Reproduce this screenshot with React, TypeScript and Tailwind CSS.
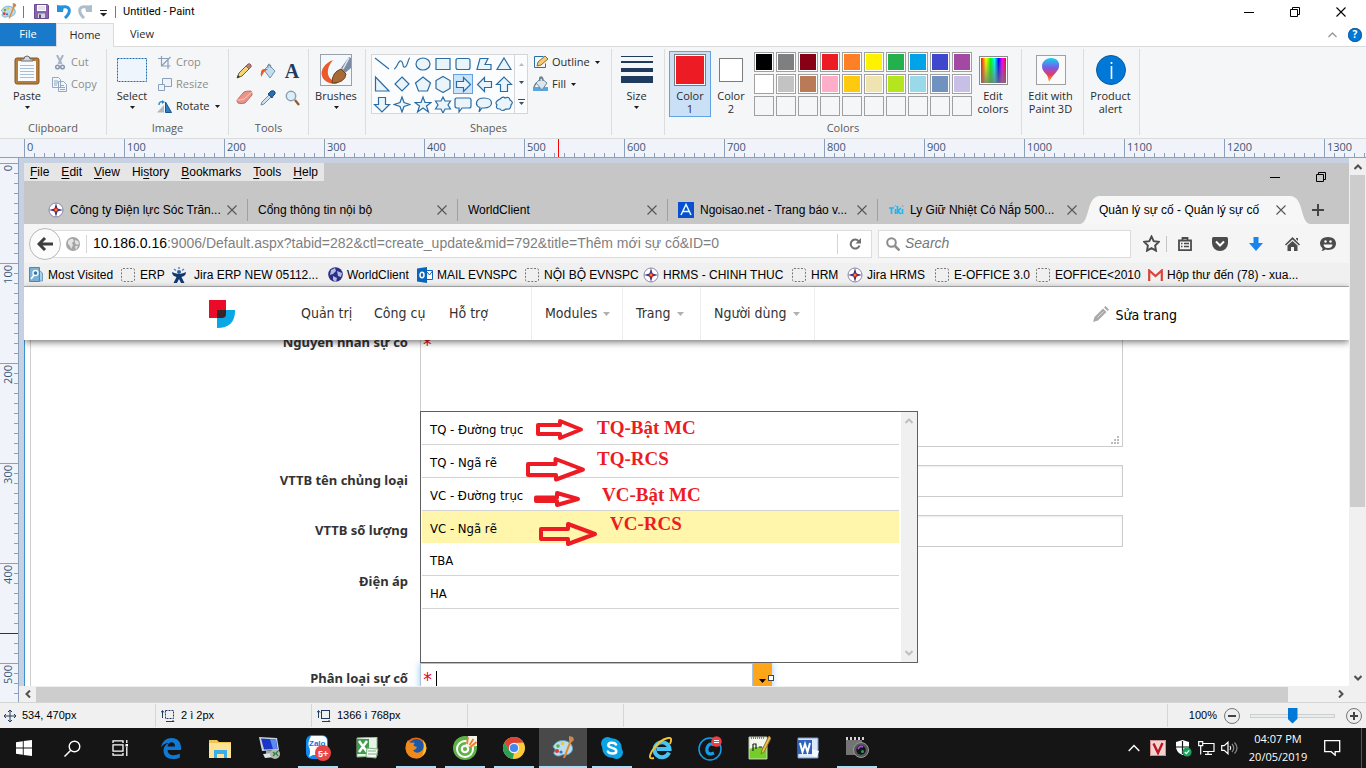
import React from "react";

const ui = "font-['Open_Sans','Noto_Sans',sans-serif]";
const sans = "font-['Liberation_Sans',Arial,sans-serif]";
const tahoma = "font-['DejaVu_Sans_Condensed','Noto_Sans',sans-serif]";

type Kids = { children?: React.ReactNode };

function Svg({ w, h, vb, children, className = "" }: Kids & { w: number; h: number; vb?: string; className?: string }) {
  return (
    <svg width={w} height={h} viewBox={vb ?? `0 0 ${w} ${h}`} fill="none" className={`shrink-0 ${className}`} aria-hidden="true">
      {children}
    </svg>
  );
}

const Caret = ({ className = "" }: { className?: string }) => (
  <Svg w={5} h={3} className={className}><path d="M0 0h5L2.5 3z" fill="#1b1b1b" /></Svg>
);

/* ---------- shared icons ---------- */

const Palette = ({ size }: { size: number }) => (
  <Svg w={size} h={size} vb="0 0 24 24">
    <path d="M3 9C6 4 14 3 19 7c4 4 3 9-1 11-3 2-5 0-7 1s-5 2-8-1c-1-2 2-3 1-5S1 12 3 9z" fill="#b9def0" stroke="#5f9cc0" />
    <circle cx="7" cy="10" r="1.8" fill="#57b13a" /><circle cx="11.500" cy="7.500" r="1.800" fill="#f2c531" />
    <circle cx="6" cy="15" r="2" fill="#e2382c" /><circle cx="10" cy="16" r="1.600" fill="#3d72c4" />
    <path d="M12 22L19 4l2 1-7 17z" fill="#e58a2c" /><path d="M18 5l0-5 4 1 1 3-2 2z" fill="#c98b4d" />
  </Svg>
);

const WinMin = () => <Svg w={10} h={10}><path d="M0 5.500h10" stroke="#000" /></Svg>;
const WinRestore = () => <Svg w={10} h={10}><path d="M.5 2.500h7v7h-7zM2.500 2.500v-2h7v7h-2" stroke="#000" /></Svg>;
const X = ({ s = 10, c = "#555" }: { s?: number; c?: string }) => (
  <Svg w={s} h={s} vb="0 0 10 10"><path d="M.5 .5l9 9M9.500 .5l-9 9" stroke={c} strokeWidth="1.100" /></Svg>
);

/* ---------- title bar and tabs ---------- */

function TitleBar() {
  return (
    <header className={`flex h-[23px] shrink-0 items-center bg-white pr-5 ${sans}`}>
      <Palette size={17} />
      <span className="ml-[6px] h-3 w-px bg-[#777]" />
      <button aria-label="Save" className="ml-[10px]">
        <Svg w={15} h={15}><path d="M.5 .5h13l1 1v13H.5z" fill="#8a62ad" stroke="#6f4a93" /><path d="M3 1h9v6H3z" fill="#fff" /><path d="M4 3h7M4 5h7" stroke="#c9c9d6" /><path d="M4 9.500h7V14H4z" fill="#d5d5dd" /><path d="M5 10.500h2V14H5z" fill="#55556b" /></Svg>
      </button>
      <button aria-label="Undo" className="ml-[8px]">
        <Svg w={14} h={14}><path d="M2 3q8-3 10 1 1.500 4-4 9" stroke="#2493dd" strokeWidth="3" /><path d="M0 0l7 1-1 6H0z" fill="#2493dd" /></Svg>
      </button>
      <button aria-label="Redo" className="ml-[7px]">
        <Svg w={14} h={14}><path d="M12 3Q4 0 2 4q-1.500 4 4 9" stroke="#aebdcb" strokeWidth="3" /><path d="M14 0L7 1l1 6h6z" fill="#aebdcb" /></Svg>
      </button>
      <button aria-label="Customize" className="ml-[8px] mt-1">
        <Svg w={7} h={7}><path d="M0 .5h7" stroke="#222" /><path d="M0 3h7L3.500 6.500z" fill="#222" /></Svg>
      </button>
      <span className="ml-[8px] h-3 w-px bg-[#777]" />
      <h1 className="ml-[7px] pt-[2px] font-['Roboto','Liberation_Sans',sans-serif] text-[11px] text-black">Untitled - Paint</h1>
      <div className="ml-auto flex items-center gap-9">
        <button aria-label="Minimize"><WinMin /></button>
        <button aria-label="Restore"><WinRestore /></button>
        <button aria-label="Close"><X c="#000" /></button>
      </div>
    </header>
  );
}

function RibbonTabs() {
  return (
    <nav className={`flex h-[23px] shrink-0 items-stretch bg-white text-[11px] text-[#2b2b2b] ${ui}`}>
      <button className="w-14 bg-[#1979ca] text-white">File</button>
      <button className="z-10 -mb-px w-[58px] border-x border-t border-[#dadbdc] bg-[#f5f6f7]">Home</button>
      <button className="w-[56px]">View</button>
      <div className="ml-auto flex items-center gap-[11px] pr-1">
        <button aria-label="Collapse ribbon"><Svg w={9} h={6}><path d="M.5 5l4-4 4 4" stroke="#999" strokeWidth="1.400" /></Svg></button>
        <button aria-label="Help" className="flex size-[14px] items-center justify-center rounded-full bg-[#0078d7] text-[10px] font-bold text-white ring-1 ring-[#1460a0] ring-inset">?</button>
      </div>
    </nav>
  );
}

/* ---------- ribbon ---------- */

function Group({ label, className, children }: Kids & { label?: string; className: string }) {
  return (
    <section className={`flex h-[86px] shrink-0 flex-col border-r border-[#dcdddf] ${className}`}>
      <div className="flex h-[73px] items-start">{children}</div>
      <div className="text-center leading-[14px] text-[#5a5a5a]">{label}</div>
    </section>
  );
}

function Big({ icon, text, text2, caret, className = "" }: { icon: React.ReactNode; text: string; text2?: string; caret?: boolean; className?: string }) {
  return (
    <button className={`flex flex-col items-center pt-[5px] text-[#2b2b2b] ${className}`}>
      <span className="flex h-8 items-center justify-center">{icon}</span>
      <span className="mt-[3px] leading-[13px] whitespace-nowrap">{text}</span>
      {text2 && <span className="leading-[13px] whitespace-nowrap">{text2}</span>}
      {caret && <Caret className="mt-1" />}
    </button>
  );
}

function Small({ icon, text, caret, dim }: { icon: React.ReactNode; text: string; caret?: boolean; dim?: boolean }) {
  return (
    <button className={`flex h-[22px] items-center gap-1 ${dim ? "text-[#8d8d8d]" : "text-[#2b2b2b]"}`}>
      <span className="flex w-[15px] shrink-0 items-center justify-center">{icon}</span>
      <span>{text}</span>
      {caret && <Caret className="ml-px" />}
    </button>
  );
}

const shapePaths = [
  "M2 3l14 11", "M1 14c3 0 4-9 7-8s1 7 4 6 3-9 5-9", "M9 3a7 6 0 1 1 0 12a7 6 0 1 1 0-12z", "M2 3.500h14v11H2z", "M4 3.500h10q2 0 2 2v7q0 2-2 2H4q-2 0-2-2v-7q0-2 2-2z", "M5 3.500h8l-3 6h6v5H2z", "M9 3l7 11.500H2z",
  "M2.500 2v14h13.500z", "M9 2l7 7-7 7-7-7z", "M9 2l7.500 6-3 8h-9l-3-8z", "M9 1.500l7 4v8l-7 4-7-4v-8z", "M2.500 6.500h7v-4l7 7-7 7v-4h-7z", "M16.500 6.500h-7v-4l-7 7 7 7v-4h7z", "M5.500 16.500h7v-7h4L9 2 1.500 9.500h4z",
  "M5.500 2.500h7v7h4L9 17 1.500 9.500h4z", "M9 2l2 5.500 6 2-6 2-2 5.500-2-5.500-6-2 6-2z", "M9 2l2 5.500h6l-4.500 3.500 2 6L9 13l-5.500 4 2-6L1 7.500h6z", "M9 2l2 4h5.500l-2.500 4 2.500 4H11l-2 4-2-4H1.500L4 10 1.500 6H7z", "M3 3h12q2 0 2 2v6q0 2-2 2H8l-3 4v-4H3q-2 0-2-2V5q0-2 2-2z", "M9 3c10 0 10 10 0 10H7l-3 4 1-4.500C-1 10 1 3 9 3z", "M5 4q3-3 5-1 4-2 5 2 4 2 1 5 0 5-5 4-4 3-6 0-5 0-3-4-3-3 3-6z",
];

function ShapesGallery() {
  return (
    <div className="mt-[5px] ml-[5px] flex h-[60px] w-[157px] shrink-0 border border-[#d5d6d8] bg-[#fbfcfd]">
      <div className="grid w-[142px] grid-cols-7">
        {shapePaths.map((d, i) => (
          <button key={i} aria-label={`Shape ${i + 1}`} className={`flex items-center justify-center ${i === 11 ? "border border-[#62a2e4] bg-[#cce4fb]" : ""}`}>
            <Svg w={18} h={18}><path d={d} stroke="#2b6ca3" strokeWidth="1.200" fill={i < 2 ? "none" : "#e9f4fb"} /></Svg>
          </button>
        ))}
      </div>
      <div className="flex flex-1 flex-col items-center justify-around border-l border-[#d5d6d8]">
        <Svg w={5} h={3}><path d="M0 3h5L2.500 0z" fill="#b5bac2" /></Svg>
        <Svg w={5} h={3}><path d="M0 0h5L2.500 3z" fill="#3b4d68" /></Svg>
        <Svg w={7} h={6}><path d="M0 .5h7" stroke="#3b4d68" /><path d="M1 3h5L3.500 6z" fill="#3b4d68" /></Svg>
      </div>
    </div>
  );
}

const swatches = [
  "bg-[#000000]", "bg-[#7f7f7f]", "bg-[#880015]", "bg-[#ed1c24]", "bg-[#ff7f27]", "bg-[#fff200]", "bg-[#22b14c]", "bg-[#00a2e8]", "bg-[#3f48cc]", "bg-[#a349a4]",
  "bg-[#ffffff]", "bg-[#c3c3c3]", "bg-[#b97a57]", "bg-[#ffaec9]", "bg-[#ffc90e]", "bg-[#efe4b0]", "bg-[#b5e61d]", "bg-[#99d9ea]", "bg-[#7092be]", "bg-[#c8bfe7]",
  "", "", "", "", "", "", "", "", "", "",
];

function Tool({ name, children }: Kids & { name: string }) {
  return <button aria-label={name} className="flex h-[27px] w-6 items-center justify-center">{children}</button>;
}

function Ribbon() {
  return (
    <div className={`flex shrink-0 border-y border-[#dadbdc] bg-[#f5f6f7] pt-[2px] pb-[3px] text-[11px] ${ui}`}>
      <Group label="Clipboard" className="w-[107px]">
        <Big className="ml-[2px] w-[50px]" text="Paste" caret icon={
          <Svg w={26} h={30}><rect x="1" y="3" width="24" height="26" rx="2" fill="#b57d3c" stroke="#855722" /><path d="M4 6h18v20H4z" fill="#f8fbfe" /><path d="M6 10.500h14M6 13.500h14M6 16.500h14M6 19.500h14M6 22.500h14" stroke="#a6bed6" /><path d="M7 6V4h3q0-3 3-3t3 3h3v2z" fill="#d7d9dc" stroke="#66696e" /></Svg>} />
        <div className="pt-[2px]">
          <Small dim text="Cut" icon={<Svg w={10} h={15}><path d="M2 0l4.500 9M8 0L3.500 9" stroke="#a5b4c8" strokeWidth="2" /><circle cx="2.500" cy="12" r="1.800" stroke="#8496b1" strokeWidth="1.500" /><circle cx="7.500" cy="12" r="1.800" stroke="#8496b1" strokeWidth="1.500" /></Svg>} />
          <Small dim text="Copy" icon={<Svg w={15} h={15}><path d="M.5 .5h6l2 2v8h-8zM6.500 4.500h5l3 3v7h-8z" fill="#f2f5f9" stroke="#93a8c5" /><path d="M2 4h4M2 6h4M2 8h3M8 8.500h4M8 10.500h5M8 12.500h5" stroke="#93a8c5" /></Svg>} />
        </div>
      </Group>

      <Group label="Image" className="w-[122px]">
        <Big className="w-[50px]" text="Select" caret icon={<Svg w={30} h={24}><rect x=".5" y=".5" width="29" height="23" fill="#eef5fc" stroke="#1c6cad" strokeDasharray="2 1" /></Svg>} />
        <div className="pt-[2px]">
          <Small dim text="Crop" icon={<Svg w={13} h={13}><path d="M3.500 0v10h9M0 2.500h10V13M3.500 10l9-9" stroke="#8a9fbc" strokeWidth="1.200" /></Svg>} />
          <Small dim text="Resize" icon={<Svg w={14} h={13}><path d="M4.500 .5h9v8h-9z" fill="#eef3f9" stroke="#8a9fbc" /><path d="M.5 6.500h6v6h-6z" fill="#eef3f9" stroke="#8a9fbc" /></Svg>} />
          <Small text="Rotate" caret icon={<Svg w={15} h={13}><path d="M0 12.500L7 5v7.500z" fill="#aeb7c2" /><path d="M8.500 2l6 10.500h-6z" fill="#2d7fc2" stroke="#16578f" /><path d="M2 5q0-4 4-3" stroke="#2f87d4" strokeWidth="1.500" /><path d="M5 0l3 2-3 2z" fill="#2f87d4" /></Svg>} />
        </div>
      </Group>

      <Group label="Tools" className="w-[80px]">
        <div className="grid grid-cols-3 pt-2 pl-[3px]">
          <Tool name="Pencil"><Svg w={16} h={16}><path d="M1 15l2-5 7-7 3 3-7 7z" fill="#f6d575" stroke="#77602a" /><path d="M10 3l2-2q2-1 3 1t-1 3l-1 1z" fill="#d67364" stroke="#7b6a62" /><path d="M1 15l1-3 2 2z" fill="#333" /></Svg></Tool>
          <Tool name="Fill with color"><Svg w={16} h={16}><path d="M4 7l5-5 6 6-5 7z" fill="#c3ddf0" stroke="#7292aa" /><path d="M8 5q-1-4 1-4t2 4" stroke="#7b8c9a" /><path d="M4 6Q0 6 1 14q2-3 3-5l4-3z" fill="#eb5a24" /></Svg></Tool>
          <Tool name="Text"><span className="font-['Liberation_Serif',serif] text-[20px] leading-none font-bold text-[#1e3c63]">A</span></Tool>
          <Tool name="Eraser"><Svg w={17} h={15}><path d="M1 10L8 2q2-1 7-1 1 1 1 4l-7 8q-4 1-7 0-1-1-1-3z" fill="#ec9489" stroke="#c0685d" /><path d="M1 10q4 0 7-1l8-7" stroke="#fbc5be" /></Svg></Tool>
          <Tool name="Color picker"><Svg w={16} h={16}><path d="M1 15l1-3 7-7 2 2-7 7z" fill="#cfe4f2" stroke="#728aa0" /><path d="M8 4l4 4 1-2q3-2 2-4t-4-1L9 3z" fill="#2b6eae" stroke="#1c4a7a" /></Svg></Tool>
          <Tool name="Magnifier"><Svg w={15} h={16}><circle cx="6" cy="6" r="4.700" fill="#dceefa" stroke="#8ea0af" strokeWidth="1.500" /><path d="M10 10l4 5" stroke="#8b5a34" strokeWidth="2.200" /></Svg></Tool>
        </div>
      </Group>

      <Group className="w-[57px]">
        <Big className="w-[54px]" text="Brushes" caret icon={
          <Svg w={32} h={32}><rect x=".5" y=".5" width="31" height="31" fill="#f3f8fc" stroke="#9ba1a8" /><path d="M13 6C5 9 0 16 2 22c1 4 6 8 14 8l3-2C9 28 3 18 13 6z" fill="#ea5a2a" /><path d="M21 14L29 3l2 1v10l-6 5z" fill="#7b8ba3" /><path d="M23 15L29 4" stroke="#dfe6ee" strokeWidth="1.500" /><path d="M12 29q0-11 9-14l5 5q-1 9-14 9z" fill="#a96b35" stroke="#70411d" /></Svg>} />
      </Group>

      <Group label="Shapes" className="w-[246px]">
        <ShapesGallery />
        <div className="ml-[5px] pt-[2px]">
          <Small text="Outline" caret icon={<Svg w={16} h={14}><path d="M1.500 1.500h9M1.500 1.500v11h11v-4" stroke="#2b6ca3" /><path d="M4 11l1-4 7-6 3 3-7 6z" fill="#f2cd76" stroke="#8a6a33" /></Svg>} />
          <Small text="Fill" caret icon={<Svg w={16} h={16}><path d="M0 11h15v4H0z" fill="#58a6e0" /><path d="M3 7l5-5 6 5-5 7z" fill="#d9e6ee" stroke="#71889b" /><path d="M7 5q-1-4 1-4t2 4M3 7l-2 4" stroke="#6c7e8d" strokeWidth="1.400" /></Svg>} />
        </div>
      </Group>

      <Group className="w-[53px]">
        <Big className="w-[49px]" text="Size" caret icon={<Svg w={32} h={28}><path d="M0 0h32v1H0zM0 5h32v2H0zM0 12h32v4H0zM0 20h32v7H0z" fill="#1e3a5f" /></Svg>} />
      </Group>

      <Group label="Colors" className="w-[357px]">
        <button className="mt-[2px] ml-1 flex h-[66px] w-[42px] shrink-0 flex-col items-center border border-[#62a2e4] bg-[#c9e0f7] pt-[2px] text-[#2b2b2b]">
          <span className="size-8 border border-[#7c7c7c] bg-[#ed1c24] ring-1 ring-white ring-inset" />
          <span className="mt-[3px] leading-[13px]">Color</span><span className="leading-[13px]">1</span>
        </button>
        <Big className="w-10" text="Color" text2="2" icon={<span className="size-6 border border-[#7c7c7c] bg-white" />} />
        <div className="mt-[3px] ml-[3px] grid shrink-0 grid-cols-10 gap-[2px]">
          {swatches.map((c, i) => (
            <button key={i} aria-label={`Palette color ${i + 1}`} className={`size-5 border border-[#a0a0a0] ${c ? "bg-white p-px" : ""}`}>
              <span className={`block size-full ${c}`} />
            </button>
          ))}
        </div>
        <Big className="ml-[2px] w-[38px]" text="Edit" text2="colors" icon={
          <span className="block h-[29px] w-[29px] border border-[#8b8b8b] bg-white p-px">
            <span className="block size-full bg-[linear-gradient(to_bottom,transparent,#777777cc),linear-gradient(to_right,#f00,#ff0_20%,#0f0_38%,#0ff_55%,#00f_70%,#f0f_85%,#f00)]" />
          </span>} />
      </Group>

      <Group className="w-[62px]">
        <Big className="w-[57px]" text="Edit with" text2="Paint 3D" icon={
          <Svg w={30} h={30}><defs><linearGradient id="p3d" x1="0" y1="0" x2="0" y2="1"><stop offset="0" stopColor="#12d4ee" /><stop offset=".4" stopColor="#7a5be8" /><stop offset=".7" stopColor="#e53a63" /><stop offset="1" stopColor="#ffb21a" /></linearGradient></defs><rect x=".5" y=".5" width="29" height="29" fill="#fafafa" stroke="#a0a0a0" /><path d="M15 3c6 0 9 4 8 9s-6 7-10 15c-1-4-1-6-3-8s-4-4-4-8 4-8 9-8z" fill="url(#p3d)" /></Svg>} />
      </Group>

      <Group className="w-[56px]">
        <Big className="w-[53px]" text="Product" text2="alert" icon={<Svg w={30} h={30}><circle cx="15" cy="15" r="14.500" fill="#0078d7" stroke="#0b5c9e" /><path d="M15.500 11v13M15.500 7v2" stroke="#fff" strokeWidth="1.600" /></Svg>} />
      </Group>
    </div>
  );
}

/* ---------- rulers ---------- */

function TopRuler() {
  return (
    <div className={`relative flex h-[19px] shrink-0 overflow-hidden border-b border-[#8ba0bb] bg-[#f1f3fa] pl-6 text-[11px] leading-4 text-[#3d5775] ${ui}`}>
      {Array.from({ length: 14 }, (_, i) => (
        <span key={i} className="w-[100px] shrink-0 border-l border-[#8ba0bb] bg-[repeating-linear-gradient(to_right,#8ba0bb_0_1px,transparent_1px_10px)] bg-[length:100%_4px] bg-bottom bg-no-repeat pl-[2px] bg-origin-border">{i * 100}</span>
      ))}
      <span className="absolute top-0 left-[558px] h-full w-px bg-[#ff0000]" />
    </div>
  );
}

function SideRuler() {
  return (
    <div className={`relative w-[19px] shrink-0 overflow-hidden border-r border-[#8ba0bb] bg-[#f1f3fa] pt-[5px] text-[11px] text-[#3d5775] ${ui}`}>
      {Array.from({ length: 6 }, (_, i) => (
        <div key={i} className="flex h-[100px] border-t border-[#8ba0bb] bg-[repeating-linear-gradient(to_bottom,#8ba0bb_0_1px,transparent_1px_10px)] bg-[length:4px_100%] bg-right bg-no-repeat pt-px bg-origin-border">
          <span className="h-max rotate-180 leading-4 [writing-mode:vertical-rl]">{i * 100}</span>
        </div>
      ))}
      <span className="absolute top-[475px] left-0 h-px w-full bg-[#333]" />
    </div>
  );
}

/* ---------- browser window on the canvas ---------- */

const Evn = () => (
  <Svg w={16} h={16}><circle cx="8" cy="8" r="7" fill="#fff" stroke="#7c7f9f" strokeWidth=".9" /><path d="M8 1l1.500 5.500L15 8 9.500 9.500 8 15 6.500 9.500 1 8l5.500-1.500z" fill="#3a3381" /><circle cx="8" cy="8" r="2.300" fill="#d62e2b" /><circle cx="8" cy="8" r="1" fill="#f7a11b" /></Svg>
);
const Blank = () => <Svg w={14} h={14}><rect x=".5" y=".5" width="13" height="13" rx="1.500" stroke="#777" strokeDasharray="2 1.500" /></Svg>;

const menu = [["", "F", "ile"], ["", "E", "dit"], ["", "V", "iew"], ["Hi", "s", "tory"], ["", "B", "ookmarks"], ["", "T", "ools"], ["", "H", "elp"]];

const tabs: { text: string; icon?: React.ReactNode }[] = [
  { text: "Công ty Điện lực Sóc Trăn...", icon: <Evn /> },
  { text: "Cổng thông tin nội bộ" },
  { text: "WorldClient" },
  { text: "Ngoisao.net - Trang báo v...", icon: <Svg w={16} h={16}><path d="M0 0h16v16H0z" fill="#0a4fd0" /><path d="M3 13L8 2.500 13 13M5 9.500h6" stroke="#dff" strokeWidth="1.500" /></Svg> },
  { text: "Ly Giữ Nhiệt Có Nắp 500...", icon: <Svg w={16} h={16}><path d="M1 6h5M3.500 6v6M7.500 7v5M9.500 4v8M13 6l-3 3 3 3M14.500 7v5" stroke="#1cb5ee" strokeWidth="1.600" /><path d="M6.500 4.500q1-2 2 0M13.500 4.500q1-2 2 0" stroke="#1cb5ee" /></Svg> },
];

function BrowserTop() {
  return (
    <div className={`bg-[#c6c6c6] text-[12px] text-black ${sans}`}>
      <div className="flex h-[33px] items-start justify-between">
        <div className="flex h-[18px] items-center bg-[#e6e6e6]">
          {menu.map(([a, b, c]) => (
            <button key={b + c} className="px-[6px]">{a}<u className="underline-offset-2">{b}</u>{c}</button>
          ))}
        </div>
        <div className="flex items-center gap-9 pt-[9px] pr-[23px]"><WinMin /><WinRestore /></div>
      </div>
      <div className="flex h-7 items-center pl-[14px]">
        {tabs.map((t, i) => (
          <div key={i} className={`flex h-[22px] w-[210px] shrink-0 items-center pr-[10px] pl-[10px] ${i < 4 ? "border-r border-[#a0a0a0]" : "border-r border-transparent"}`}>
            {t.icon && <span className="mr-[6px]">{t.icon}</span>}
            <span className="flex-1 truncate text-clip">{t.text}</span>
            <button aria-label="Close tab"><X /></button>
          </div>
        ))}
        <div className="-ml-2 flex h-7 shrink-0 items-center">
          <Svg w={20} h={28}><path d="M0 28C10 27 6 0 20 0v28z" fill="#f7f7f7" /></Svg>
          <div className="-ml-px flex h-7 w-[191px] items-center justify-between bg-[#f7f7f7] pr-1">
            <span className="whitespace-nowrap">Quản lý sự cố - Quản lý sự cố</span>
            <button aria-label="Close tab"><X /></button>
          </div>
          <Svg w={20} h={28}><path d="M20 28C10 27 14 0 0 0v28z" fill="#f7f7f7" /></Svg>
          <button aria-label="New tab" className="ml-[2px]"><Svg w={12} h={12}><path d="M6 0v12M0 6h12" stroke="#444" strokeWidth="2" /></Svg></button>
        </div>
      </div>
    </div>
  );
}

function BrowserToolbar() {
  return (
    <div className={`flex h-[39px] items-center bg-[#f5f5f5] pl-[5px] pr-[3px] ${sans}`}>
      <button aria-label="Back" className="z-10 flex size-8 shrink-0 items-center justify-center rounded-full border border-[#b8b8b8] bg-[#fbfbfb]">
        <Svg w={16} h={14}><path d="M8 1L2 7l6 6M2 7h14" stroke="#3e3e3e" strokeWidth="3" /></Svg>
      </button>
      <div className="-ml-2 flex h-7 flex-1 items-center border border-[#dcdcdc] bg-white pl-[12px]">
        <Svg w={14} h={14}><circle cx="7" cy="7" r="7" fill="#a5a5a5" /><path d="M2 4q3-3 5-2l1 2-2 2 1 2-2 4-1-3-2-2zM9 3l3 1 1 3-2 1-2-2zM9 9l3 0-2 4z" fill="#e4e4e4" /></Svg>
        <span className="ml-[6px] h-[18px] w-px bg-[#d5d5d5]" />
        <div className="ml-[6px] flex-1 text-[14px] whitespace-nowrap text-[#7f7f7f]">
          <span className="text-black">10.186.0.16</span>:9006/Default.aspx?tabid=282&amp;ctl=create_update&amp;mid=792&amp;title=Thêm mới sự cố&amp;ID=0
        </div>
        <button aria-label="Reload" className="flex h-5 w-[34px] items-center justify-center border-l border-[#d5d5d5]">
          <Svg w={12} h={12}><path d="M9.500 3A4.500 4.500 0 1 0 10.500 7.500" stroke="#6f6f6f" strokeWidth="2" /><path d="M12 0v5.500H6.500z" fill="#6f6f6f" /></Svg>
        </button>
      </div>
      <label className="ml-[6px] flex h-7 w-[253px] items-center border border-[#dcdcdc] bg-white pl-[7px]">
        <Svg w={14} h={14}><circle cx="5.500" cy="5.500" r="4.300" stroke="#8c8c8c" strokeWidth="2" /><path d="M9 9l4.500 4.500" stroke="#8c8c8c" strokeWidth="2.500" /></Svg>
        <input aria-label="Search" placeholder="Search" className="ml-[5px] w-full bg-transparent text-[14px] italic outline-none placeholder:text-[#777]" />
      </label>
      <button aria-label="Bookmark this page" className="flex w-[35px] justify-center pl-[6px]"><Svg w={17} h={17}><path d="M8.500 1.500l2.200 4.700 5 .7-3.600 3.600.9 5.200-4.500-2.500L4 15.700l.9-5.200L1.300 6.900l5-.7z" stroke="#4c4c4c" strokeWidth="1.900" /></Svg></button>
      <button aria-label="Bookmarks list" className="flex h-4 w-9 items-center justify-center border-l border-[#c5c5c5]"><Svg w={14} h={14}><path d="M1 3.500h12v9.700H1zM4.500 3V1h5v2" stroke="#4c4c4c" strokeWidth="1.800" /><path d="M3 6.500h1.500M6 6.500h5M3 9.500h1.500M6 9.500h5" stroke="#4c4c4c" strokeWidth="1.400" /></Svg></button>
      <button aria-label="Pocket" className="flex w-9 justify-center"><Svg w={16} h={14}><path d="M1.500 0h13Q16 0 16 1.500V6a8 8 0 0 1-16 0V1.500Q0 0 1.500 0z" fill="#4c4c4c" /><path d="M4 4.500l4 4 4-4" stroke="#fff" strokeWidth="2" /></Svg></button>
      <button aria-label="Downloads" className="flex w-9 justify-center"><Svg w={14} h={14}><path d="M4.500 0h5v6H14l-7 8-7-8h4.500z" fill="#1a84ee" /></Svg></button>
      <button aria-label="Home page" className="flex w-9 justify-center"><Svg w={15} h={14}><path d="M7.500 0L15 7.500l-1 1L7.500 2.500 1 8.500l-1-1zM11 1h2v3l-2-2z" fill="#4c4c4c" /><path d="M2.500 8.500l5-4.500 5 4.500V14H9v-4H6v4H2.500z" fill="#4c4c4c" /></Svg></button>
      <button aria-label="Chat" className="flex w-9 justify-center"><Svg w={16} h={14}><path d="M8 0c5 0 8 2.800 8 6.500S13 13 8 13q-1.500 0-2.500-.4Q4 14 1.500 14q1.200-1.200 1-2.800Q0 9.500 0 6.500C0 2.800 3 0 8 0z" fill="#4c4c4c" /><path d="M3.500 7.500h9Q12 11 8 11T3.500 7.500z" fill="#fff" /><circle cx="5.500" cy="4.500" r="1.200" fill="#fff" /><circle cx="10.500" cy="4.500" r="1.200" fill="#fff" /></Svg></button>
    </div>
  );
}

const bookmarks: { text: string; w: string; icon: React.ReactNode }[] = [
  { text: "Most Visited", w: "w-[92px]", icon: <Svg w={14} h={15}><path d="M.5 .5h10v14H.5z" fill="#7ab0d6" stroke="#4c87b5" /><path d="M11 4l2.500 2v8H11" fill="#a9cfe8" stroke="#6ba0c8" /><circle cx="6.500" cy="6" r="2.500" stroke="#fff" strokeWidth="1.300" fill="#3675ab" /><path d="M5 8l-3 4" stroke="#fff" strokeWidth="1.500" /></Svg> },
  { text: "ERP", w: "w-[52px]", icon: <Blank /> },
  { text: "Jira ERP NEW 05112...", w: "w-[155px]", icon: <Svg w={14} h={16} className="mr-[4px]"><path d="M2 2l2 1.500M12 2l-2 1.500M7 0v2" stroke="#5b87b9" strokeWidth="1.500" /><path d="M0 5q5 2 7 2t7-2q0 4-4.500 5l3 6h-3.500l-2-4-2 4H1.500l3-6Q0 9 0 5z" fill="#123a72" /><circle cx="7" cy="5" r="2" fill="#2d5f9e" /></Svg> },
  { text: "WorldClient", w: "w-[90px]", icon: <Svg w={15} h={15}><circle cx="7.500" cy="7.500" r="7.300" fill="#2c2f86" /><path d="M3 3l4-2 1 3-3 3-3 1zM9 4l5 2-1 4-3-1zM5 9l4 2-1 4-3-2z" fill="#b5bde0" /></Svg> },
  { text: "MAIL EVNSPC", w: "w-[107px]", icon: <Svg w={16} h={16}><path d="M9 3.500h6.500v9H9z" fill="#fff" stroke="#0a66bd" /><path d="M9 4l3.500 4 3-4" stroke="#0a66bd" /><path d="M0 1.500L10 0v16L0 14.500z" fill="#0a66bd" /><ellipse cx="5" cy="8" rx="2" ry="2.700" stroke="#fff" strokeWidth="1.500" /></Svg> },
  { text: "NỘI BỘ EVNSPC", w: "w-[119px]", icon: <Blank /> },
  { text: "HRMS - CHINH THUC", w: "w-[148px]", icon: <Evn /> },
  { text: "HRM", w: "w-[56px]", icon: <Blank /> },
  { text: "Jira HRMS", w: "w-[87px]", icon: <Evn /> },
  { text: "E-OFFICE 3.0", w: "w-[101px]", icon: <Blank /> },
  { text: "EOFFICE<2010", w: "w-[112px]", icon: <Blank /> },
  { text: "Hộp thư đến (78) - xua...", w: "w-[155px]", icon: <Svg w={15} h={12}><path d="M1 11.500h13V1H1z" fill="#f2f2f2" /><path d="M1.200 12V1.500l6.300 5.500 6.300-5.500V12" stroke="#d8433a" strokeWidth="2.200" /></Svg> },
];

function BookmarksBar() {
  return (
    <div className={`flex h-6 items-center border-b border-[#b5b5b5] bg-[#f0f0f0] pl-1 text-[12px] text-black ${sans}`}>
      {bookmarks.map((b) => (
        <a key={b.text} href="#" className={`flex shrink-0 items-center gap-1 whitespace-nowrap ${b.w}`}>
          <span className="flex min-w-4 justify-center">{b.icon}</span>{b.text}
        </a>
      ))}
    </div>
  );
}

function SiteHeader() {
  const drop = (t: string, w: string) => (
    <button className={`flex items-center gap-[6px] border-r border-[#ededed] pl-[13px] ${w}`}>
      {t}<Svg w={7} h={4}><path d="M0 0h7L3.500 4z" fill="#b0b0b0" /></Svg>
    </button>
  );
  return (
    <div className={`relative z-10 flex h-[53px] items-stretch bg-white text-[14px] text-[#333] shadow-[0_2px_7px_rgba(0,0,0,0.55)] ${tahoma}`}>
      <Svg w={26} h={28} className="mt-[13px] ml-[185px]"><path d="M0 0h17v18H0z" fill="#ec0a29" /><path d="M8 10h18v1c0 11-6 17-18 17z" fill="#0aa7e6" /><path d="M8 10h9v4q0 4-4 4H8z" fill="#3b2327" /></Svg>
      <nav className="ml-[66px] flex items-center">
        <a href="#" className="w-[73px]">Quản trị</a>
        <a href="#" className="w-[75px]">Công cụ</a>
        <a href="#" className="w-[82px]">Hỗ trợ</a>
      </nav>
      <nav className="flex border-l border-[#ededed]">
        {drop("Modules", "w-[91px]")}
        {drop("Trang", "w-[78px]")}
        {drop("Người dùng", "w-[114px]")}
      </nav>
      <a href="#" className="mr-[172px] ml-auto flex items-center gap-[6px] pt-1 text-black">
        <Svg w={16} h={16} className="-mt-1"><path d="M0 16l1.500-5L10 2.500 13.500 6 5 14.500z" fill="#a9a9a9" /><path d="M11 1.500L12.500 0 16 3.500 14.500 5z" fill="#a9a9a9" /><path d="M4.500 11.500l6-6" stroke="#d9d9d9" /></Svg>
        Sửa trang
      </a>
    </div>
  );
}

const labelCls = "w-[377px] shrink-0 text-right font-['Noto_Sans','Open_Sans',sans-serif] text-[13px] font-bold text-[#333]";
const inputCls = "h-8 min-w-0 flex-1 border border-[#ccc] shadow-[inset_0_1px_2px_rgba(0,0,0,0.08)] outline-none";

function Form() {
  return (
    <form className={`flex flex-1 flex-col gap-[18px] overflow-hidden border-l border-[#d0d0d0] bg-white pr-[226px] text-[13px] ${tahoma}`}>
      <div className="flex shrink-0 gap-3">
        <label htmlFor="cause" className={`-mt-2 leading-5 ${labelCls}`}>Nguyên nhân sự cố</label>
        <div className="relative h-[107px] flex-1">
          <textarea id="cause" className="block size-full resize-none border border-t-0 border-[#ccc] outline-none" />
          <span className="absolute -top-[6px] left-[3px] text-[19px] leading-5 text-[#f00020]">*</span>
          <Svg w={8} h={8} className="absolute right-1 bottom-[3px]"><path d="M6 0h2v2H6zM3 3h2v2H3zM6 3h2v2H6zM0 6h2v2H0zM3 6h2v2H3zM6 6h2v2H6z" fill="#bbb" /></Svg>
        </div>
      </div>
      <div className="flex shrink-0 items-center gap-3">
        <label htmlFor="kind" className={labelCls}>VTTB tên chủng loại</label>
        <input id="kind" className={inputCls} />
      </div>
      <div className="flex shrink-0 items-center gap-3">
        <label htmlFor="qty" className={labelCls}>VTTB số lượng</label>
        <input id="qty" className={inputCls} />
      </div>
      <div className="flex h-20 shrink-0 gap-3">
        <span className={`leading-8 ${labelCls}`}>Điện áp</span>
      </div>
      <div className="flex shrink-0 items-center gap-3">
        <label htmlFor="category" className={labelCls}>Phân loại sự cố</label>
        <div className="flex h-8 w-[352px] shadow-[0_0_7px_rgba(82,168,236,0.6)]">
          <span className="flex w-[14px] shrink-0 items-center justify-center border-y border-l border-[#a9c4dc] bg-white text-[19px] leading-5 text-[#f00020]">*</span>
          <span className="flex w-[3px] shrink-0 items-center justify-end border-y border-[#a9c4dc] bg-white"><span className="h-4 w-px bg-black" /></span>
          <input id="category" className="w-full min-w-0 border-y border-[#a9c4dc] bg-white outline-none" />
          <button type="button" aria-label="Open list" className="relative flex w-5 shrink-0 items-center justify-center border-l border-[#a9c4dc] bg-[#ffa51a] pt-[4px]">
            <Svg w={7} h={4}><path d="M0 0h7L3.500 4z" fill="#000" /></Svg>
            <span className="absolute top-[12px] -right-[2px] size-[6px] border border-[#444] bg-white" />
          </button>
        </div>
      </div>
    </form>
  );
}

const options = ["TQ - Đường trục", "TQ - Ngã rẽ", "VC - Đường trục", "VC - Ngã rẽ", "TBA", "HA"];

function OptionList() {
  return (
    <div className={`absolute top-[248px] left-[396px] z-20 flex h-[252px] w-[498px] border border-[#5f5f5f] bg-white text-[13px] text-black ${tahoma}`}>
      <ul role="listbox" aria-label="Phân loại sự cố" className="mr-[2px] ml-px flex-1">
        {options.map((o, i) => (
          <li key={o} role="option" aria-selected={i === 3} className={`flex items-center px-2 pt-[3px] ${i === 3 ? "h-8 bg-[#fff5ab]" : "h-[33px] border-b border-[#d3d3d3]"}`}>{o}</li>
        ))}
      </ul>
      <div className="flex w-4 flex-col items-center justify-between bg-[#f0f0f0] py-[6px]">
        <Svg w={8} h={6}><path d="M.5 5L4 1.500 7.500 5" stroke="#bfbfbf" strokeWidth="2" /></Svg>
        <Svg w={8} h={6}><path d="M.5 1L4 4.500 7.500 1" stroke="#bfbfbf" strokeWidth="2" /></Svg>
      </div>
    </div>
  );
}

/* Red notes painted over the list; coordinates are canvas pixels. */
function Notes() {
  const note = "absolute z-30 font-['Liberation_Serif',serif] text-[19px] leading-[22px] font-bold whitespace-nowrap text-[#ed1c24]";
  return (
    <>
      <svg width="80" height="140" viewBox="524 415 80 140" fill="none" stroke="#ed1c24" strokeWidth="4" strokeLinejoin="round" className="absolute top-[252px] left-[500px] z-30" aria-hidden="true">
        <path d="M538 425H560V421L581 429.500L560 438V434H538Z" />
        <path d="M528 464H555.500V459L583 469.500L556 479.500V475H528Z" />
        <path d="M536 497.500H557V493L578 499L557 505V501H536ZM536 499.200H557" />
        <path d="M541 529H568V524L595 534L568 544V539H541Z" />
      </svg>
      <span className={`top-[254px] left-[573px] ${note}`}>TQ-Bật MC</span>
      <span className={`top-[285px] left-[573px] ${note}`}>TQ-RCS</span>
      <span className={`top-[321px] left-[578px] ${note}`}>VC-Bật MC</span>
      <span className={`top-[350px] left-[586px] ${note}`}>VC-RCS</span>
    </>
  );
}

function Canvas() {
  return (
    <div className="relative flex min-h-0 flex-1 flex-col overflow-hidden bg-white">
      <BrowserTop />
      <BrowserToolbar />
      <BookmarksBar />
      <SiteHeader />
      <div className="flex min-h-0 flex-1 border-l border-[#3b93cf] pl-[5px]"><Form /></div>
      <OptionList />
      <Notes />
    </div>
  );
}

/* ---------- status bar and task bar ---------- */

function StatusBar() {
  const cell = "flex h-[23px] w-[156px] items-center gap-[6px] border-r border-[#d5d5d5] pl-1";
  return (
    <footer className={`flex h-[26px] shrink-0 items-center border-t border-[#d5d5d5] bg-[#f0f0f0] text-[11px] text-black ${sans}`}>
      <div className={cell}><Svg w={12} h={12}><path d="M6 0v12M0 6h12M4 2l2-2 2 2M4 10l2 2 2-2M2 4L0 6l2 2M10 4l2 2-2 2" stroke="#1e3c63" /></Svg>534, 470px</div>
      <div className={cell}><Svg w={14} h={12} className="ml-[1px]"><path d="M1.500 1v7M0 2.500L1.500 .5 3 2.500M5 11.500h8M11.500 10l1.500 1.500" stroke="#1e3c63" /><rect x="4.500" y=".5" width="8" height="8" stroke="#1e3c63" strokeDasharray="2 1" /></Svg>2 ì 2px</div>
      <div className={cell}><Svg w={14} h={12} className="ml-[1px]"><path d="M1.500 1v7M0 2.500L1.500 .5 3 2.500M5 11.500h8M11.500 10l1.500 1.500" stroke="#1e3c63" /><rect x="4.500" y=".5" width="8" height="8" stroke="#1e3c63" /></Svg>1366 ì 768px</div>
      <div className={cell} />
      <div className="flex h-[23px] flex-1 border-r border-[#d5d5d5]" />
      <div className="flex w-[198px] items-center justify-end pr-1">
        <span className="mr-[7px]">100%</span>
        <button aria-label="Zoom out" className="flex size-4 items-center justify-center rounded-full border border-[#777] bg-[#eee]"><span className="h-[2px] w-2 bg-[#444]" /></button>
        <input type="range" aria-label="Zoom" defaultValue={50} className="mr-[11px] ml-[10px] h-4 w-[85px] appearance-none bg-transparent [&::-webkit-slider-runnable-track]:h-1 [&::-webkit-slider-runnable-track]:border [&::-webkit-slider-runnable-track]:border-[#ccd0cf] [&::-webkit-slider-runnable-track]:bg-[#e9ecec] [&::-webkit-slider-thumb]:-mt-[7px] [&::-webkit-slider-thumb]:h-4 [&::-webkit-slider-thumb]:w-[10px] [&::-webkit-slider-thumb]:appearance-none [&::-webkit-slider-thumb]:bg-[#0078d7] [&::-webkit-slider-thumb]:[clip-path:polygon(0_0,100%_0,100%_70%,50%_100%,0_70%)]" />
        <button aria-label="Zoom in" className="flex size-4 items-center justify-center rounded-full border border-[#777] bg-[#eee]"><Svg w={8} h={8}><path d="M4 0v8M0 4h8" stroke="#444" strokeWidth="2" /></Svg></button>
      </div>
    </footer>
  );
}

const apps: { name: string; open?: boolean; active?: boolean; icon: React.ReactNode }[] = [
  { name: "Edge", icon: <Svg w={20} h={21}><path d="M0 9.500C1 3 6 0 10.500 0 16.500 0 20 4 20 9.500V12H6.500c.5 4 3 5.200 6 5.200 2.500 0 4.500-.7 6.300-1.700v4C17 20.500 14.500 21 12 21 6 21 2.500 17.500 2.500 12.500 2.500 9 4.500 6.500 8 5 4.500 5 1.500 6.500 0 9.500zM6.500 8.500H14C14 5.500 12.500 4.300 10.500 4.300S7 6 6.500 8.500z" fill="#0f7ad6" /></Svg> },
  { name: "File Explorer", icon: <Svg w={22} h={19}><path d="M0 1h8l2 2h12v16H0z" fill="#f0c452" /><path d="M0 4h22v15H0z" fill="#fde394" /><path d="M5 11h13v8h-3v-4H8v4H5z" fill="#3aaee6" /></Svg> },
  { name: "Remote Desktop", icon: <Svg w={22} h={24}><path d="M1 1l18 1 2 12-17 1z" fill="#c7d3df" /><path d="M3 2.500l15 1 1.500 9.500L6 13.500z" fill="#1a37c8" /><path d="M12 3l6 .5L19 13l-4 .3z" fill="#5c8af0" /><path d="M8 15h5l1 3h-6z" fill="#9ba6b0" /><path d="M5 18l10-1 2 4-10 1z" fill="#dfe4e8" /><circle cx="17" cy="18" r="5" fill="#b3bbaf" /><path d="M15 16l2 2-2 2M20 15l-2 2 2 3" stroke="#25823f" strokeWidth="1.300" /></Svg> },
  { name: "Zalo", open: true, icon: <Svg w={26} h={26}><rect x="1" y="0" width="22" height="24" rx="6" fill="#0d8bf0" /><path d="M6 1h11q5 0 5 5v9q0 5-5 5H8l-4 2q2-6 0-10T6 1z" fill="#fff" /><circle cx="18" cy="18" r="8" fill="#ea4546" /><text x="4" y="11" fontSize="8" fontWeight="700" fill="#1471d8" fontFamily="Liberation Sans">Zalo</text><text x="13" y="22" fontSize="9" fontWeight="700" fill="#fff" fontFamily="Liberation Sans">5+</text></Svg> },
  { name: "Excel", icon: <Svg w={23} h={22}><path d="M1 1l20-1v19L1 20z" fill="#e7f3e6" stroke="#88b98b" /><path d="M1 2h12v15H1z" fill="#3f9c4b" /><path d="M3 4l8 11M11 4L3 15" stroke="#fff" strokeWidth="2.500" /><path d="M11 11l11 1-2 9-10-1z" fill="#f5faf5" stroke="#7aae7d" /><path d="M12 14h8M12 17h8" stroke="#7aae7d" /></Svg> },
  { name: "Firefox", open: true, icon: <Svg w={22} h={22}><circle cx="11" cy="11" r="10.500" fill="#e66b12" /><circle cx="11.500" cy="9.500" r="7.500" fill="#1c58a8" /><path d="M1 7l2-4 2 3q3-1 5 0-2 1-1 3l3 1q-1 3-4 3 2 4 7 2 5-3 4-9 4 5 1 10-3 5-8 5.500Q2 21 .6 12z" fill="#f08a1b" /><path d="M18 3q4 5 3 10-1 4-4 6 3-6 1-16z" fill="#fbc52d" /></Svg> },
  { name: "Coc Coc", open: true, icon: <Svg w={25} h={24}><circle cx="12" cy="12" r="12" fill="#5fb346" /><circle cx="12" cy="13" r="8" stroke="#fff" strokeWidth="2" /><circle cx="12" cy="13" r="3.200" stroke="#fff" strokeWidth="2.200" /><path d="M12 11l3-11h9v10z" fill="#f3f1e8" /><path d="M14 8l1-7M16.500 9l4-6M17.500 11l6-5" stroke="#f27b24" strokeWidth="1.800" /></Svg> },
  { name: "Chrome", open: true, icon: <Svg w={22} h={22}><circle cx="11" cy="11" r="11" fill="#fbcb3c" /><path d="M1.500 5.500A11 11 0 0 1 20.500 5.500L11 6 6 13.500z" fill="#dc4437" /><path d="M1.500 5.500L6.200 13.600 11 16l-1.300 6A11 11 0 0 1 1.500 5.500z" fill="#2ca053" /><circle cx="11" cy="11" r="5.200" fill="#f5f5f5" /><circle cx="11" cy="11" r="4.100" fill="#4587f2" /></Svg> },
  { name: "Paint", open: true, active: true, icon: <Palette size={24} /> },
  { name: "Skype", open: true, icon: <Svg w={22} h={22}><circle cx="11" cy="11" r="9.800" fill="#0da2e4" /><circle cx="6.500" cy="6.500" r="6.500" fill="#0da2e4" /><circle cx="15.500" cy="15.500" r="6.500" fill="#0da2e4" /><path d="M15 7.500C13.500 5.300 7.300 5 7.300 8.300c0 3.200 8 2 8 5.600 0 3.600-7 3.200-8.500.6" stroke="#fff" strokeWidth="2.500" strokeLinecap="round" /></Svg> },
  { name: "Internet Explorer", icon: <Svg w={24} h={23}><path d="M20 15.500A7.500 7.500 0 1 1 20.500 12H8" stroke="#45c3f3" strokeWidth="4" /><path d="M5 21Q-2 23 3 14 10 3 19 1q5-1 2 6" stroke="#f5c431" strokeWidth="1.900" /></Svg> },
  { name: "CCleaner", icon: <Svg w={25} h={25}><circle cx="12" cy="13" r="11" stroke="#139eea" strokeWidth="1.500" /><path d="M16 9q-5-3-7 3-1 6 4 6l3-1" stroke="#139eea" strokeWidth="3.200" /><circle cx="18.500" cy="5.500" r="5.200" fill="#f33c43" /><path d="M16 4.500h5M16 6.500h5" stroke="#fff" /></Svg> },
  { name: "Notepad++", icon: <Svg w={23} h={24}><path d="M1 1h18v22H1z" fill="#f3f6ed" stroke="#b8c5ae" /><path d="M1.500 13q8-4 17-1v10.500h-17z" fill="#73cf28" /><path d="M5 8v7M5 8h3v5M11 11h3M15 11h3" stroke="#222" strokeWidth="1.200" /><path d="M3 2h14" stroke="#7d8378" strokeDasharray="1 1" strokeWidth="2" /><path d="M13 18l1-4 7-14 2 2-7 14z" fill="#eac54d" stroke="#9a6c2c" /></Svg> },
  { name: "Word", icon: <Svg w={23} h={22}><path d="M1 1h20v20H1z" fill="#dbe8fa" stroke="#7896cf" /><path d="M1 3h14v14H1z" fill="#2f62bb" /><path d="M3 6l2.500 9L8 7l2.500 8L13 6" stroke="#fff" strokeWidth="2" /><path d="M15 12l7 2-2 6-5-1z" fill="#f6f9fe" /></Svg> },
  { name: "Recorder", open: true, icon: <Svg w={23} h={22}><path d="M0 3h16v15H0z" fill="#747474" /><path d="M0 1.500h20" stroke="#d5d5d5" strokeWidth="3" strokeDasharray="2 2" /><circle cx="15" cy="13" r="7.500" fill="#55565a" stroke="#999" /><circle cx="15" cy="13" r="4.700" fill="#141418" /><path d="M12 12q2-4 5-2" stroke="#a152d5" strokeWidth="1.800" /><circle cx="16.500" cy="14.500" r="1.500" fill="#2c9a62" /></Svg> },
];

function TaskBar() {
  return (
    <nav className={`flex h-10 shrink-0 items-stretch bg-[#151515] text-[11px] text-white ${ui}`}>
      <button aria-label="Start" className="flex w-12 items-center justify-center"><Svg w={16} h={16}><path d="M0 2.200l6.800-.9v6.300H0zM7.700 1.100L16 0v7.600H7.700zM0 8.400h6.800v6.300L0 13.800zM7.700 8.400H16V16l-8.300-1.100z" fill="#fff" /></Svg></button>
      <button aria-label="Search" className="flex w-12 items-center justify-center"><Svg w={17} h={17}><circle cx="10.500" cy="6.500" r="5.300" stroke="#fff" strokeWidth="1.400" /><path d="M6.500 10.500L.5 16.500" stroke="#fff" strokeWidth="1.500" /></Svg></button>
      <button aria-label="Task view" className="mr-[3px] flex w-12 items-center justify-center"><Svg w={17} h={16}><path d="M1 3V.8h10V3M1 13v2.200h10V13M1 4.800h10v6.400H1zM14.800 0v3M14.800 7v9" stroke="#fff" strokeWidth="1.300" /><path d="M13.500 4h2.500v2.500h-2.500z" fill="#fff" /></Svg></button>
      {apps.map((a) => (
        <button key={a.name} aria-label={a.name} className={`relative mr-px flex w-12 shrink-0 items-center justify-center ${a.active ? "bg-[#494949]" : ""}`}>
          {a.icon}
          {a.open && <span className={`absolute bottom-0 h-[2px] bg-[#a9dcf5] ${a.active ? "inset-x-0" : "inset-x-1"}`} />}
        </button>
      ))}
      <div className="ml-auto flex items-center">
        <button aria-label="Show hidden icons" className="mr-[10px]"><Svg w={12} h={8}><path d="M.7 7L6 1.500 11.300 7" stroke="#fff" strokeWidth="1.400" /></Svg></button>
        <Svg w={16} h={16}><path d="M0 0h16v16H0z" fill="#f0d4d4" /><path d="M.5 .5h15v15H.5z" stroke="#cf8e8e" /><path d="M3.500 3.500L8 13l4.500-10" stroke="#bd1520" strokeWidth="2.400" /></Svg>
        <Svg w={17} h={17} className="ml-[9px]"><path d="M7.500 0l6.500 2v5q0 5-6.500 8Q1 12 1 7V2z" fill="#fff" /><path d="M7.500 1v13M1 7h13" stroke="#151515" strokeWidth="1.200" /><circle cx="12" cy="12" r="4.600" fill="#1aa45b" /><path d="M9.800 12l1.600 1.700 2.800-3.300" stroke="#fff" strokeWidth="1.200" /></Svg>
        <Svg w={17} h={14} className="ml-[6px]"><path d="M4.500 2.500H16v8H5M10 10.500v3M7 13.300h7M.7 .7h4v4h-4zM2.700 4.500v9" stroke="#fff" strokeWidth="1.200" /></Svg>
        <Svg w={17} h={14} className="ml-[6px]"><path d="M.7 4.700h2.500L7 1.200v11.600L3.200 9.300H.7z" stroke="#fff" strokeWidth="1.200" /><path d="M9 5q1.500 2 0 4" stroke="#fff" strokeWidth="1.200" /><path d="M11 3q3.500 4 0 8M13.500 1.500q5 5.500 0 11" stroke="#888" strokeWidth="1.200" /></Svg>
        <div className="ml-[8px] w-[64px] text-center leading-[18px]"><div>04:07 PM</div><div>20/05/2019</div></div>
        <button aria-label="Notifications" className="ml-[14px]"><Svg w={17} h={16}><path d="M.7 .7h15v11h-4.500v3.500l-4-3.500H.7z" stroke="#fff" strokeWidth="1.300" /></Svg></button>
        <span className="mr-1 ml-[20px] h-10 w-px bg-[#555]" />
      </div>
    </nav>
  );
}

const Arrow = ({ d, w, h }: { d: string; w: number; h: number }) => <Svg w={w} h={h}><path d={d} stroke="#505050" strokeWidth="2" /></Svg>;

export default function App() {
  return (
    <div className="flex h-screen min-h-0 flex-col overflow-hidden bg-white">
      <TitleBar />
      <RibbonTabs />
      <Ribbon />
      <TopRuler />
      <main className="flex min-h-0 flex-1">
        <SideRuler />
        <div className="flex min-w-0 flex-1 flex-col">
          <div className="flex min-h-0 flex-1 flex-col bg-[#c8d1e1] pt-[5px] pl-[5px]"><Canvas /></div>
          <div className="flex h-4 shrink-0 items-center bg-[#f0f0f0]">
            <span className="flex w-[17px] justify-center"><Arrow w={6} h={8} d="M5 .5L1.500 4 5 7.500" /></span>
            <span className="mr-[44px] h-[15px] flex-1 bg-[#cdcdcd]" />
            <span className="flex w-[17px] justify-center"><Arrow w={6} h={8} d="M1 .5L4.500 4 1 7.500" /></span>
          </div>
        </div>
        <div className="flex w-[17px] shrink-0 flex-col items-center bg-[#f0f0f0] pb-4">
          <span className="flex h-[17px] items-center"><Arrow w={8} h={6} d="M.5 5L4 1.500 7.500 5" /></span>
          <span className="h-[332px] w-[15px] bg-[#cdcdcd]" />
          <span className="mt-auto flex h-[17px] items-center"><Arrow w={8} h={6} d="M.5 1L4 4.500 7.500 1" /></span>
        </div>
      </main>
      <StatusBar />
      <TaskBar />
    </div>
  );
}
